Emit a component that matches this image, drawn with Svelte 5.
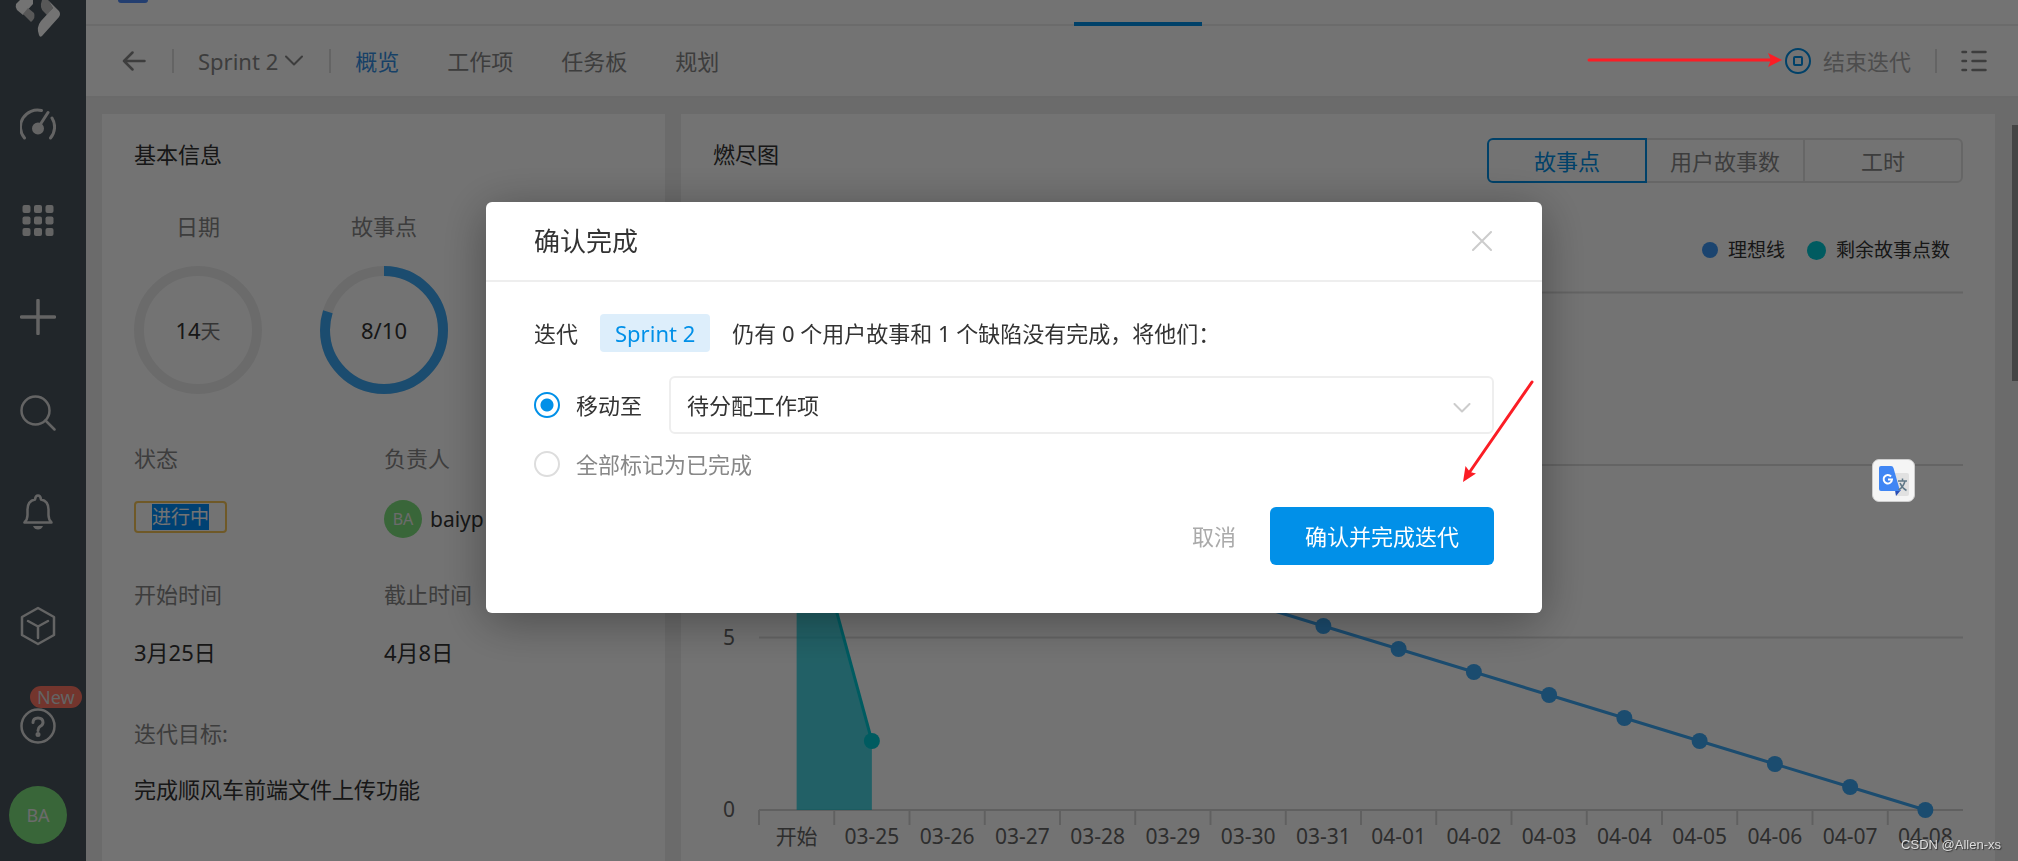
<script lang="ts">
	const tabs = ['概览', '工作项', '任务板', '规划'];
	const metrics = ['故事点', '用户故事数', '工时'];
	const days = [
		'开始', '03-25', '03-26', '03-27', '03-28', '03-29', '03-30', '03-31',
		'04-01', '04-02', '04-03', '04-04', '04-05', '04-06', '04-07', '04-08'
	];
	const remaining = [10, 2];

	// chart geometry
	const left = 46;
	const right = 1250;
	const base = 534;
	const unit = 34.5;
	const step = (right - left) / days.length;

	const px = (i: number) => left + step * (i + 0.5);
	const py = (v: number) => base - v * unit;

	const ideal = days.map((_, i) => ({ x: px(i), y: py(10 - (10 * i) / (days.length - 1)) }));
	const actual = remaining.map((v, i) => ({ x: px(i), y: py(v) }));
	const toPoints = (list: { x: number; y: number }[]) => list.map((p) => `${p.x},${p.y}`).join(' ');
	const area = `${px(0)},${base} ${toPoints(actual)} ${px(1)},${base}`;

	let activeTab = $state('概览');
	let metric = $state('故事点');
	let action = $state('move');
	let target = $state('backlog');
</script>

<div class="app">
	<aside class="sidebar">
		<svg class="logo" width="46" height="38" viewBox="0 0 46 38">
			<path d="M17 0 5 0 1 4Q0 7 2 10L8 15 18 4V0Z" fill="#fff" />
			<path d="M8 14 16 22Q21 18 19 13L13 8Z" fill="#c4c4c4" />
			<path d="M27 0Q24 8 29 12L32 15 38 8 33 0Z" fill="#c4c4c4" />
			<path d="M33 0 44 11Q46 14 44 17L27 36Q25 38 24 35 21 27 26 21L38 8Z" fill="#fff" />
		</svg>
		<nav class="tools">
			<button aria-label="仪表盘">
				<svg width="36" height="36" viewBox="0 0 36 36">
					<path d="M4.500 31A17 17 0 0 1 21.500 3.500M32 11A17 17 0 0 1 30.500 31M18 21 28 5.500" />
					<circle cx="18" cy="21.500" r="4.500" class="solid" />
				</svg>
			</button>
			<button aria-label="应用">
				<svg width="36" height="36" viewBox="0 0 36 36">
					{#each [2, 13.5, 25] as y}
						{#each [2.5, 14, 25.5] as x}
							<rect {x} {y} width="8" height="8" rx="2" class="solid" stroke="none" />
						{/each}
					{/each}
				</svg>
			</button>
			<button aria-label="新建">
				<svg width="36" height="36" viewBox="0 0 36 36"><path d="M18 1.500V34.500M1.500 18H34.500" stroke-width="3.500" /></svg>
			</button>
			<button aria-label="搜索">
				<svg width="36" height="36" viewBox="0 0 36 36">
					<circle cx="15.500" cy="15.500" r="14" stroke-width="2.500" />
					<path d="M25.500 25.500 34.500 34.500" stroke-width="2.500" />
				</svg>
			</button>
			<button aria-label="通知">
				<svg width="36" height="40" viewBox="0 0 36 40">
					<path d="M4.500 31.500H31.500Q28.500 28.500 28.500 24V18.500Q28.500 10 21 8.500 20.500 4.500 18 4.500 15.500 4.500 15 8.500 7.500 10 7.500 18.500V24Q7.500 28.500 4.500 31.500Z" stroke-width="2.500" />
					<path d="M13 35H23Q21.500 38.500 18 38.500 14.500 38.500 13 35Z" class="solid" stroke="none" />
				</svg>
			</button>
		</nav>
		<nav class="tools bottom">
			<button aria-label="产品">
				<svg width="36" height="40" viewBox="0 0 36 40">
					<path d="M18 2 34 11V29L18 38 2 29V11ZM8 15 18 20.500 28 15M18 20.500V32" stroke-width="2.500" />
				</svg>
			</button>
			<button class="help" aria-label="帮助">
				<svg width="36" height="36" viewBox="0 0 36 36">
					<circle cx="18" cy="18" r="16.500" stroke-width="2.500" />
					<path d="M13 14.500Q13 10 18 10 23 10 23 14.500 23 17 20 18.500 18 19.800 18 22.500" />
					<circle cx="18" cy="26.500" r="1" class="solid" />
				</svg>
				<span class="new">New</span>
			</button>
		</nav>
		<span class="avatar large">BA</span>
	</aside>

	<main>
		<div class="topbar">
			<span class="project"></span>
			<span class="indicator"></span>
		</div>

		<header class="toolbar">
			<button class="icon" aria-label="返回">
				<svg width="24" height="20" viewBox="0 0 24 20" class="stroke">
					<path d="M22.500 10H2M10.500 1.500 2 10 10.500 18.500" stroke-width="2.500" />
				</svg>
			</button>
			<span class="divider"></span>
			<button class="sprint">
				Sprint 2
				<svg width="18" height="12" viewBox="0 0 18 12" class="stroke"><path d="M1 1.500 9 9.500 17 1.500" stroke-width="2" /></svg>
			</button>
			<span class="divider"></span>
			<nav class="tabs">
				{#each tabs as tab}
					<button class:active={activeTab === tab} onclick={() => (activeTab = tab)}>{tab}</button>
				{/each}
			</nav>
			<button class="finish">
				<svg width="26" height="26" viewBox="0 0 26 26">
					<circle cx="13" cy="13" r="12" />
					<rect x="9" y="9" width="8" height="8" rx="1" />
				</svg>
				结束迭代
			</button>
			<span class="divider"></span>
			<button class="icon" aria-label="列表">
				<svg width="26" height="22" viewBox="0 0 26 22" class="stroke">
					<path d="M1.500 2H5M11.500 2H24.500M1.500 11H5M11.500 11H24.500M1.500 20H5M11.500 20H24.500" stroke-width="2.500" />
				</svg>
			</button>
		</header>

		<div class="content">
			<section class="card info">
				<h2>基本信息</h2>
				<div class="rings">
					<div class="ring">
						<span class="label">日期</span>
						<svg width="128" height="128" viewBox="0 0 128 128">
							<circle cx="64" cy="64" r="59" class="track" />
							<text x="64" y="73">14<tspan class="unit">天</tspan></text>
						</svg>
					</div>
					<div class="ring">
						<span class="label">故事点</span>
						<svg width="128" height="128" viewBox="0 0 128 128">
							<circle cx="64" cy="64" r="59" class="track" />
							<circle cx="64" cy="64" r="59" class="value" pathLength="100" stroke-dasharray="80 100" transform="rotate(-90 64 64)" />
							<text x="64" y="73">8/10</text>
						</svg>
					</div>
				</div>
				<div class="fields people">
					<span class="label">状态</span>
					<span class="label">负责人</span>
					<span class="status"><mark>进行中</mark></span>
					<span class="owner"><span class="avatar">BA</span>baiyp</span>
				</div>
				<div class="fields dates">
					<span class="label">开始时间</span>
					<span class="label">截止时间</span>
					<span>3月25日</span>
					<span>4月8日</span>
				</div>
				<div class="goal">
					<span class="label">迭代目标:</span>
					<span>完成顺风车前端文件上传功能</span>
				</div>
			</section>

			<section class="card burndown">
				<div class="head">
					<h2>燃尽图</h2>
					<div class="segmented">
						{#each metrics as m}
							<button class:active={metric === m} onclick={() => (metric = m)}>{m}</button>
						{/each}
					</div>
				</div>
				<div class="legend">
					<span><i></i>理想线</span>
					<span><i class="teal"></i>剩余故事点数</span>
				</div>
				<svg class="chart" viewBox="0 0 1250 585">
					{#each [5, 10, 15] as v}
						<line x1={left} x2={right} y1={py(v)} y2={py(v)} class="grid" />
						<text x="22" y={py(v) + 7} text-anchor="end">{v}</text>
					{/each}
					<text x="22" y={base + 7} text-anchor="end">0</text>
					<line x1={left} x2={right} y1={base} y2={base} class="axis" />
					{#each days as day, i}
						<line x1={left + step * i} x2={left + step * i} y1={base} y2={base + 15} class="axis" />
						<text x={px(i)} y="568" text-anchor="middle">{day}</text>
					{/each}
					<polygon points={area} class="area" />
					<polyline points={toPoints(ideal)} class="ideal" />
					{#each ideal as p}
						<circle cx={p.x} cy={p.y} r="8" fill="#3da8f5" />
					{/each}
					<polyline points={toPoints(actual)} class="actual" />
					{#each actual as p}
						<circle cx={p.x} cy={p.y} r="8" fill="#00c9d6" />
					{/each}
				</svg>
			</section>
		</div>
		<span class="scrollbar"></span>
	</main>
</div>

<div class="overlay">
	<div class="modal" role="dialog" aria-modal="true" aria-labelledby="modal-title">
		<div class="modal-head">
			<h1 id="modal-title">确认完成</h1>
			<button class="icon" aria-label="关闭">
				<svg width="20" height="20" viewBox="0 0 20 20" class="stroke"><path d="M1 1 19 19M19 1 1 19" stroke-width="2" /></svg>
			</button>
		</div>
		<form class="modal-body" onsubmit={(e) => e.preventDefault()}>
			<p>
				迭代
				<span class="badge">Sprint 2</span>
				仍有 0 个用户故事和 1 个缺陷没有完成，将他们：
			</p>
			<div class="option">
				<input type="radio" id="move" value="move" bind:group={action} />
				<label for="move">移动至</label>
				<div class="select">
					<select aria-label="移动至" bind:value={target}>
						<option value="backlog">待分配工作项</option>
					</select>
					<svg width="18" height="10" viewBox="0 0 18 10" class="stroke"><path d="M1.500 1 9 8.500 16.500 1" stroke-width="2" /></svg>
				</div>
			</div>
			<div class="option muted">
				<input type="radio" id="done" value="done" bind:group={action} />
				<label for="done">全部标记为已完成</label>
			</div>
			<div class="actions">
				<button type="button" class="cancel">取消</button>
				<button type="submit" class="confirm">确认并完成迭代</button>
			</div>
		</form>
	</div>
</div>

<svg class="arrow to-finish" width="196" height="16" viewBox="0 0 196 16">
	<path d="M2 8H185" />
	<path d="M195 8 181 1 184 8 181 15Z" class="tip" />
</svg>
<svg class="arrow to-confirm" width="72" height="104" viewBox="0 0 72 104">
	<path d="M70 2 7 93" />
	<path d="M1 102 3.500 86 8 92 14 93.500Z" class="tip" />
</svg>

<button class="translate" aria-label="翻译">
	<svg width="32" height="32" viewBox="0 0 32 32">
		<path d="M13 8H29Q31 8 31 10V29Q31 31 29 31H18Z" fill="#e1e1e1" />
		<path d="M17 25H23L18 31Z" fill="#2a4fb5" />
		<path d="M3 1H13Q15 1 15.500 3L22 26H3Q1 26 1 24V3Q1 1 3 1Z" fill="#4086f4" />
		<path d="M13 11.500A4.200 4.200 0 1 0 14 14.500H10" fill="none" stroke="#fff" stroke-width="2" />
		<path d="M20 16H29M24.500 13.500V16M27 16Q25.500 22 20.500 25M22 18Q24 23 28.500 25.500" fill="none" stroke="#607988" stroke-width="1.500" />
	</svg>
</button>

<span class="watermark">CSDN @Allen-xs</span>

<style>
	:global(body) {
		margin: 0;
		font: 22px/32px 'Noto Sans', 'Noto Sans CJK SC', sans-serif;
		color: #333;
		overflow: hidden;
	}

	button {
		display: flex;
		align-items: center;
		justify-content: center;
		padding: 0;
		border: 0;
		background: none;
		color: inherit;
		font: inherit;
		white-space: nowrap;
		cursor: pointer;
	}

	h1,
	h2,
	p {
		margin: 0;
		font-size: 22px;
		font-weight: 400;
	}

	svg {
		display: block;
		flex: none;
	}

	.stroke {
		fill: none;
		stroke: currentColor;
		stroke-linecap: round;
		stroke-linejoin: round;
	}

	.label {
		color: #888;
	}

	.app {
		display: flex;
		height: 100vh;
		overflow: hidden;
		background: #eee;
	}

	.sidebar {
		display: flex;
		flex-direction: column;
		align-items: center;
		flex: none;
		box-sizing: border-box;
		width: 86px;
		padding-right: 10px;
		background: #49545d;
		color: #ddd;
	}

	.tools {
		display: flex;
		flex-direction: column;
		gap: 60px;
		margin-top: 69px;

		svg {
			fill: none;
			stroke: currentColor;
			stroke-width: 3;
			stroke-linecap: round;
			stroke-linejoin: round;
		}

		.solid {
			fill: currentColor;
		}

		&.bottom {
			gap: 62px;
			margin-top: 75px;
			margin-bottom: 42px;
		}
	}

	.help {
		position: relative;
	}

	.new {
		position: absolute;
		left: 10px;
		bottom: 36px;
		padding: 0 7px;
		border-radius: 11px;
		background: #ff7564;
		font-size: 18px;
		line-height: 22px;
	}

	.avatar {
		display: flex;
		align-items: center;
		justify-content: center;
		flex: none;
		width: 38px;
		height: 38px;
		border-radius: 50%;
		background: #7fe27f;
		color: #eee;
		font-size: 16px;

		&.large {
			width: 58px;
			height: 58px;
			font-size: 18px;
		}
	}

	main {
		position: relative;
		flex: 1;
		min-width: 0;
	}

	.topbar {
		position: relative;
		height: 24px;
		border-bottom: 2px solid #eee;
		background: #fff;
	}

	.project {
		display: block;
		width: 30px;
		height: 3px;
		margin-left: 32px;
		border-radius: 0 0 6px 6px;
		background: #4e8af9;
	}

	.indicator {
		position: absolute;
		left: 988px;
		bottom: -2px;
		width: 128px;
		height: 4px;
		background: #0190e8;
	}

	.toolbar {
		display: flex;
		align-items: center;
		height: 70px;
		padding: 0 31px 0 36px;
		border-bottom: 2px solid #eaeaea;
		background: #fff;
		color: #888;
	}

	.divider {
		width: 2px;
		height: 24px;
		margin: 0 24px 0 26px;
		background: #ddd;
	}

	.sprint {
		gap: 7px;
	}

	.tabs {
		display: flex;
		flex: 1;
		gap: 48px;

		.active {
			color: #348fe4;
		}
	}

	.finish {
		gap: 12px;
		color: #aaa;

		svg {
			fill: none;
			stroke: #0190e8;
			stroke-width: 2;
		}

		& + .divider {
			margin: 0 24px;
		}
	}

	.content {
		display: flex;
		gap: 16px;
		padding: 16px 23px 0 16px;
	}

	.card {
		box-sizing: border-box;
		min-height: 760px;
		padding: 24px 32px;
		background: #fff;
	}

	.info {
		flex: none;
		width: 563px;
	}

	.rings {
		display: flex;
		gap: 58px;
		margin-top: 40px;
	}

	.ring {
		display: flex;
		flex-direction: column;
		align-items: center;
		gap: 24px;

		circle {
			fill: none;
			stroke-width: 10;
		}

		.track {
			stroke: #eee;
		}

		.value {
			stroke: #3da8f5;
		}

		text {
			fill: #333;
			font-size: 22px;
			text-anchor: middle;
		}

		.unit {
			fill: #777;
			font-size: 20px;
		}
	}

	.fields {
		display: grid;
		grid-template-columns: 250px 1fr;
		align-items: center;
		row-gap: 26px;
	}

	.people {
		margin-top: 48px;
	}

	.dates {
		margin-top: 40px;
	}

	.status {
		justify-self: start;
		height: 28px;
		margin-bottom: 4px;
		padding: 0 16px;
		border: 2px solid #f6c659;
		border-radius: 4px;
		font-size: 19px;
		line-height: 28px;
	}

	mark {
		display: block;
		height: 26px;
		margin-top: 1px;
		background: #0090ff;
		color: #fff;
		line-height: 26px;
	}

	.owner {
		display: flex;
		align-items: center;
		gap: 8px;
		font-size: 21px;
	}

	.goal {
		display: flex;
		flex-direction: column;
		gap: 24px;
		margin-top: 49px;
	}

	.burndown {
		flex: 1;
		min-width: 0;
	}

	.head {
		display: flex;
		align-items: flex-start;
		justify-content: space-between;
	}

	.segmented {
		display: flex;

		button {
			box-sizing: border-box;
			width: 160px;
			height: 45px;
			border: 2px solid #e2e2e2;
			color: #888;
		}

		button + button {
			margin-left: -2px;
		}

		button:first-child {
			border-radius: 6px 0 0 6px;
		}

		button:last-child {
			border-radius: 0 6px 6px 0;
		}

		.active {
			position: relative;
			border-color: #0190e8;
			color: #0190e8;
		}
	}

	.legend {
		display: flex;
		justify-content: flex-end;
		gap: 22px;
		margin: 51px 13px 10px;
		font-size: 19px;

		span {
			display: flex;
			align-items: center;
			gap: 10px;
		}

		i {
			width: 16px;
			height: 16px;
			border-radius: 50%;
			background: #3d98f5;
		}

		.teal {
			width: 19px;
			height: 19px;
			background: #00c9d6;
		}
	}

	.chart {
		width: 100%;

		text {
			fill: #666;
			font-size: 21px;
		}

		.grid {
			stroke: #ddd;
			stroke-width: 2;
		}

		.axis {
			stroke: #d4d4d4;
			stroke-width: 2;
		}

		.area {
			fill: #00c5d5;
			opacity: 0.7;
		}

		.ideal,
		.actual {
			fill: none;
			stroke: #3da8f5;
			stroke-width: 3;
		}

		.actual {
			stroke: #00c9d6;
		}
	}

	.scrollbar {
		position: absolute;
		top: 125px;
		right: 0;
		width: 6px;
		height: 256px;
		background: #999;
	}

	.overlay {
		position: fixed;
		inset: 0;
		display: flex;
		align-items: flex-start;
		justify-content: center;
		padding: 202px 0 0 10px;
		background: rgba(0, 0, 0, 0.55);
	}

	.modal {
		width: 1056px;
		border-radius: 6px;
		background: #fff;
		box-shadow: 0 8px 48px rgba(0, 0, 0, 0.35);
	}

	.modal-head {
		display: flex;
		align-items: center;
		justify-content: space-between;
		height: 78px;
		padding: 0 50px 0 48px;
		border-bottom: 2px solid #eee;

		h1 {
			font-size: 26px;
		}

		.icon {
			color: #ccc;
		}
	}

	.modal-body {
		padding: 32px 48px 48px;

		p {
			display: flex;
			align-items: center;
			gap: 22px;
		}
	}

	.badge {
		padding: 3px 15px;
		border-radius: 4px;
		background: #ddeefb;
		color: #0190e8;
	}

	.option {
		display: flex;
		align-items: center;
		margin-top: 24px;

		&.muted {
			margin-top: 14px;
			color: #888;
		}

		input {
			appearance: none;
			width: 26px;
			height: 26px;
			margin: 0 16px 0 0;
			border: 2px solid #ddd;
			border-radius: 50%;

			&:checked {
				border-color: #0190e8;
				background: radial-gradient(circle, #0190e8 6px, #fff 7px);
			}
		}
	}

	.select {
		position: relative;
		flex: 1;
		margin-left: 27px;

		select {
			appearance: none;
			width: 100%;
			height: 58px;
			padding: 0 16px;
			border: 2px solid #eee;
			border-radius: 6px;
			background: #fff;
			color: inherit;
			font: inherit;
		}

		svg {
			position: absolute;
			top: 27px;
			right: 23px;
			color: #ccc;
			pointer-events: none;
		}
	}

	.actions {
		display: flex;
		justify-content: flex-end;
		gap: 34px;
		margin-top: 27px;
	}

	.cancel {
		color: #aaa;
	}

	.confirm {
		height: 58px;
		padding: 0 35px;
		border-radius: 6px;
		background: #0190e8;
		color: #fff;
	}

	.arrow {
		position: fixed;
		fill: none;
		stroke: #fb1d25;
		stroke-width: 3;
		stroke-linecap: round;
		pointer-events: none;
	}

	.tip {
		fill: #fb1d25;
		stroke: none;
	}

	.to-finish {
		top: 52px;
		right: 235px;
	}

	.to-confirm {
		top: 380px;
		right: 484px;
	}

	.translate {
		position: fixed;
		top: 459px;
		right: 103px;
		width: 43px;
		height: 43px;
		border: 1px solid #ccc;
		border-radius: 7px;
		background: #f5f5f5;
	}

	.watermark {
		position: fixed;
		right: 17px;
		bottom: 6px;
		color: #ddd;
		font: 13px/20px 'Liberation Sans', sans-serif;
		text-shadow: 1px 1px 1px #333;
	}
</style>
